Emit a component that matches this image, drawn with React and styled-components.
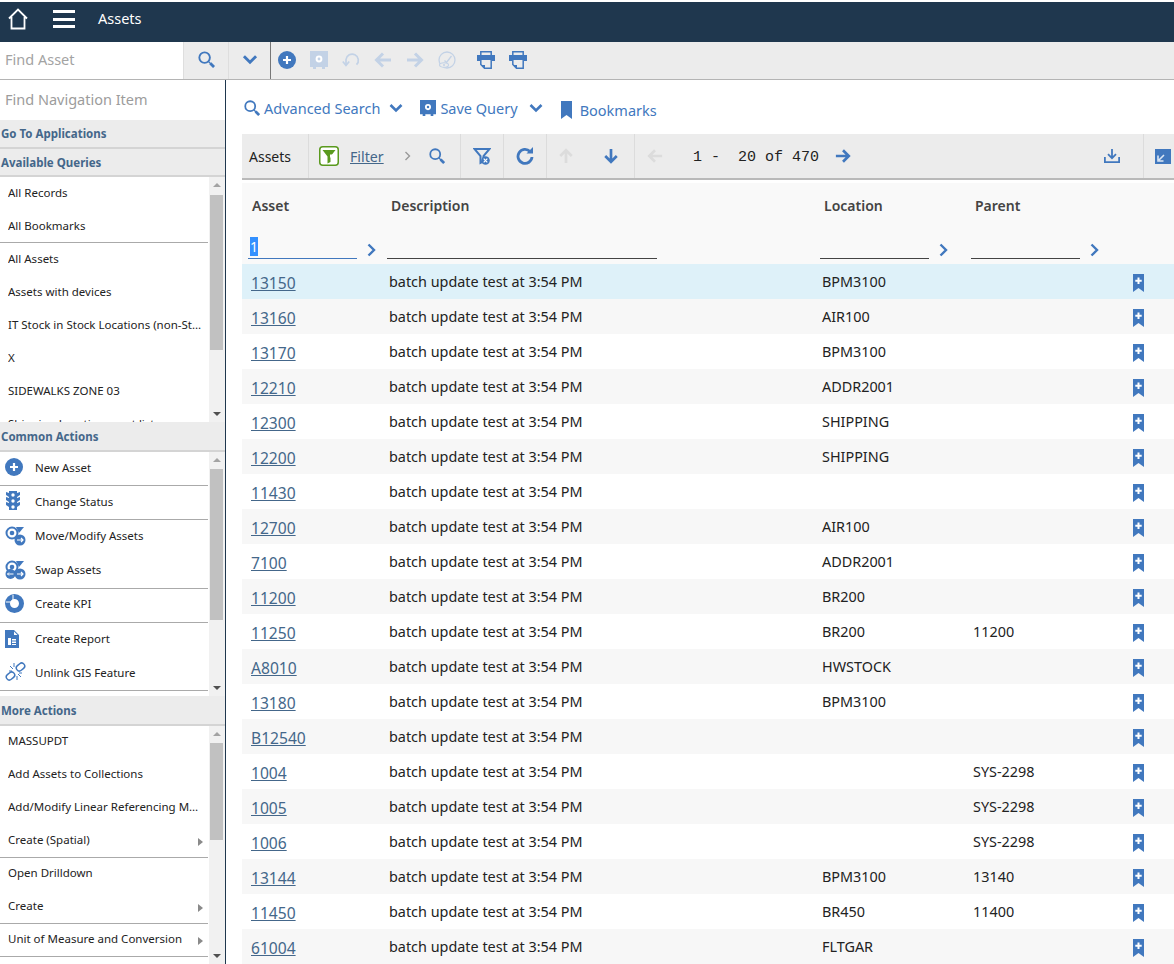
import React from 'react';
import styled, { createGlobalStyle } from 'styled-components';

const BLUE = '#4178be';
const FAINT = '#c3d2e6';
const NAVY = '#1f374e';

const GlobalStyle = createGlobalStyle`
  html, body { margin: 0; padding: 0; background: #fff; }
  body { font-family: "Noto Sans", "Open Sans", sans-serif; color: #222; }
  * { box-sizing: border-box; }
`;

const Page = styled.div`
  width: 1174px;
  height: 964px;
  overflow: hidden;
  padding-top: 2px;
  display: flex;
  flex-direction: column;
`;

const Header = styled.header`
  height: 40px;
  flex: none;
  background: ${NAVY};
  display: flex;
  align-items: center;
  padding-left: 7px;
  color: #fff;
`;

const HomeWrap = styled.span`
  margin: 0 0 6px 1px;
`;

const HeaderTitle = styled.span`
  font-size: 14.5px;
  margin-left: 23px;
  margin-bottom: 9px;
`;

const Hamburger = styled.div`
  width: 22px;
  height: 18px;
  margin-left: 25px;
  margin-bottom: 6px;
  display: flex;
  flex-direction: column;
  justify-content: space-between;
  span { height: 3px; background: #fff; display: block; }
`;

const AppToolbar = styled.div`
  height: 38px;
  flex: none;
  background: #ececec;
  border-bottom: 1px solid #b4b4b4;
  display: flex;
  align-items: center;
`;

const FindBox = styled.div`
  width: 183px;
  height: 100%;
  background: #fff;
  color: #a3a3a3;
  font-size: 14.5px;
  padding: 0 0 3px 5px;
  display: flex;
  align-items: center;
`;

const ToolSquare = styled.div`
  width: ${p => p.$w}px;
  height: 100%;
  flex: none;
  padding-bottom: 2px;
  display: flex;
  align-items: center;
  justify-content: center;
  border-left: 1px solid #dedede;
  border-right: ${p => (p.$edge ? '1px solid #777' : '0')};
`;

const ToolIcons = styled.div`
  display: flex;
  align-items: center;
  gap: 14px;
  margin-left: 7px;
  padding-bottom: 2px;
`;

const PrintGroup = styled.div`
  display: flex;
  gap: 14px;
  margin-left: 7px;
`;

const Body = styled.div`
  flex: 1;
  min-height: 0;
  display: flex;
`;

const Sidebar = styled.aside`
  width: 226px;
  flex: none;
  border-right: 1px solid ${NAVY};
  display: flex;
  flex-direction: column;
  overflow: hidden;
`;

const NavSearch = styled.div`
  height: 40px;
  flex: none;
  color: #9c9c9c;
  font-size: 14.5px;
  padding: 0 0 2px 5px;
  display: flex;
  align-items: center;
`;

const SectionTitle = styled.div`
  height: ${p => p.$h}px;
  flex: none;
  background: #ececec;
  border-bottom: 2px solid #d4d4d4;
  color: #44678a;
  font-size: 11.5px;
  font-weight: 700;
  padding-left: 1px;
  display: flex;
  align-items: center;
`;

const Section = styled.div`
  height: ${p => p.$h}px;
  flex: none;
  display: flex;
  overflow: hidden;
`;

const MenuList = styled.div`
  width: 209px;
  flex: none;
  overflow: hidden;
`;

const MenuRow = styled.div`
  height: ${p => p.$h}px;
  border-bottom: ${p => (p.$sep ? '1px solid #aaa' : '0')};
  width: 208px;
  display: flex;
  align-items: center;
  font-size: 11.5px;
  color: #222;
  padding: 0 4px ${p => p.$pb}px ${p => (p.$icon ? 5 : 8)}px;
`;

const MenuText = styled.span`
  white-space: nowrap;
  overflow: hidden;
  text-overflow: ellipsis;
  flex: 1;
  min-width: 0;
`;

const MenuIcon = styled.span`
  width: 30px;
  flex: none;
  display: flex;
  align-items: center;
`;

const Submenu = styled.span`
  width: 0;
  height: 0;
  flex: none;
  margin: 5px 1px 0 8px;
  border-left: 5px solid #8a8a8a;
  border-top: 4px solid transparent;
  border-bottom: 4px solid transparent;
`;

const ScrollTrack = styled.div`
  width: 16px;
  flex: none;
  background: #f1f1f1;
  display: flex;
  flex-direction: column;
  align-items: center;
  position: relative;
`;

const ScrollThumb = styled.div`
  position: absolute;
  left: 1px;
  width: 13px;
  top: ${p => p.$top}px;
  height: ${p => p.$h}px;
  background: #c1c1c1;
`;

const ScrollArrow = styled.span`
  position: absolute;
  left: 4px;
  ${p => (p.$down ? 'bottom: 6px;' : 'top: 6px;')}
  width: 0;
  height: 0;
  border-left: 4px solid transparent;
  border-right: 4px solid transparent;
  ${p => (p.$down ? 'border-top: 4px solid #505050;' : 'border-bottom: 4px solid #a3a3a3;')}
`;

const Main = styled.main`
  flex: 1;
  min-width: 0;
  padding-left: 16px;
  display: flex;
  flex-direction: column;
  overflow: hidden;
`;

const ActionBar = styled.div`
  height: 54px;
  flex: none;
  display: flex;
  align-items: center;
  padding: 2px 0 0 2px;
`;

const ActionLink = styled.span`
  color: ${BLUE};
  font-size: 14.5px;
  display: flex;
  align-items: center;
  gap: ${p => p.$gap ?? 4}px;
  margin-right: ${p => p.$mr ?? 0}px;
  margin-top: ${p => p.$mt ?? 0}px;
`;

const GridBar = styled.div`
  height: 46px;
  flex: none;
  background: #ececec;
  border-bottom: 2px solid #b9b9b9;
  display: flex;
  align-items: stretch;
  font-size: 14px;
`;

const BarCell = styled.div`
  width: ${p => p.$w}px;
  flex: none;
  display: flex;
  align-items: center;
  justify-content: ${p => (p.$start ? 'flex-start' : 'center')};
  gap: ${p => p.$gap ?? 0}px;
  padding-left: ${p => p.$pl ?? 0}px;
  border-right: ${p => (p.$line ? '1px solid #dcdcdc' : '0')};
`;

const FilterLink = styled.span`
  color: #44678a;
  text-decoration: underline;
  font-size: 14.2px;
  margin-left: 11px;
`;

const BarGap = styled.span`
  display: flex;
  margin-left: ${p => p.$l}px;
`;

const PageCount = styled.span`
  font-family: "Liberation Mono", "DejaVu Sans Mono", monospace;
  font-size: 15px;
  white-space: pre;
  color: #222;
  margin: 2px 0 0 30px;
`;

const Spacer = styled.div`
  flex: 1;
`;

const TableHead = styled.div`
  margin-top: 3px;
  height: 81px;
  flex: none;
  background: #f9f9f9;
`;

const Columns = styled.div`
  display: grid;
  grid-template-columns: 139px 433px 151px 151px 58px;
  align-items: center;
`;

const TitleRow = styled(Columns)`
  height: 46px;
  padding-bottom: 2px;
`;

const ColTitle = styled.div`
  font-size: 14px;
  font-weight: 600;
  color: #444;
  padding-left: 10px;
`;

const FilterRow = styled(Columns)`
  height: 35px;
  align-items: start;
  padding-top: 8px;
`;

const FilterCell = styled.div`
  display: flex;
  align-items: center;
  padding-left: ${p => p.$pl}px;
`;

const FilterInput = styled.div`
  width: ${p => p.$w}px;
  height: 22px;
  flex: none;
  font-size: 14px;
  line-height: 18px;
  padding: 1px 0 0 2px;
  border-bottom: 1px solid ${p => (p.$active ? BLUE : '#444')};
  mark { background: #3390ff; color: #fff; }
`;

const Chevron = styled.span`
  margin-left: 10px;
  margin-top: 3px;
  display: flex;
`;

const Row = styled(Columns)`
  height: 35px;
  background: ${p => (p.$active ? '#def1f9' : p.$odd ? '#f7f7f7' : '#fff')};
  font-size: 14.4px;
  color: #222;
`;

const Cell = styled.div`
  padding-left: 8px;
  white-space: nowrap;
`;

const AssetLink = styled.a`
  color: #44678a;
  text-decoration: underline;
  font-size: 15.6px;
  padding: 2px 0 0 9px;
`;

const BookmarkCell = styled.div`
  padding-left: 17px;
  display: flex;
  align-items: center;
  padding-top: 2px;
`;

const Svg = ({ s = 18, w, h, vb = '0 0 18 18', children }) => (
  <svg width={w ?? s} height={h ?? s} viewBox={vb} style={{ flex: 'none', display: 'block' }}>
    {children}
  </svg>
);

const Search = ({ c = BLUE, s = 18 }) => (
  <Svg s={s}>
    <circle cx="7" cy="7" r="5.600" fill="none" stroke={c} strokeWidth="2" />
    <path d="M11 11l2.500 2.500" stroke={c} strokeWidth="1.400" />
    <path d="M13 13l4 4" stroke={c} strokeWidth="3" />
  </Svg>
);

const ChevDown = ({ c = BLUE, w = 14, h = 10 }) => (
  <Svg w={w} h={h} vb="0 0 14 10">
    <path d="M1.500 2l5.500 5.500L12.500 2" fill="none" stroke={c} strokeWidth="2.600" />
  </Svg>
);

const ChevRight = () => (
  <Svg w={9} h={14} vb="0 0 9 14">
    <path d="M1.500 1.500L7 7l-5.500 5.500" fill="none" stroke={BLUE} strokeWidth="2.400" />
  </Svg>
);

const PlusCircle = ({ s = 18 }) => (
  <Svg s={s}>
    <circle cx="9" cy="9" r="9" fill={BLUE} />
    <path d="M9 5v8M5 9h8" stroke="#fff" strokeWidth="2.200" />
  </Svg>
);

const SafeIcon = ({ c = BLUE, s = 18 }) => (
  <Svg s={s}>
    <path d="M0 0h18v16h-3v2h-3v-2H6v2H3v-2H0z" fill={c} />
    <circle cx="9" cy="8" r="3.400" fill="#fff" />
    <circle cx="9" cy="8" r="1.400" fill={c} />
  </Svg>
);

const Undo = ({ c = FAINT }) => (
  <Svg>
    <path d="M4 13V8.500a6.200 6.200 0 1 1 10.500 5.200" fill="none" stroke={c} strokeWidth="1.700" />
    <path d="M0.800 10.500L4 14.500l3.200-4" fill="none" stroke={c} strokeWidth="1.700" />
  </Svg>
);

const Arrow = ({ dir, c = BLUE, s = 18 }) => {
  const turn = { left: 180, right: 0, up: 270, down: 90 }[dir];
  return (
    <Svg s={s}>
      <g transform={`rotate(${turn} 9 9)`}>
        <path d="M1 9h14M9 2.500l6.500 6.500L9 15.500" fill="none" stroke={c} strokeWidth="3" />
      </g>
    </Svg>
  );
};

const NoView = ({ c = FAINT }) => (
  <Svg>
    <circle cx="9" cy="9" r="8" fill="none" stroke={c} strokeWidth="1.300" />
    <path d="M6.500 9.500l2 2L13.500 5" fill="none" stroke={c} strokeWidth="1.300" />
    <ellipse cx="6" cy="14" rx="4.500" ry="2.300" fill="#ececec" stroke={c} strokeWidth="1.100" />
    <circle cx="6" cy="14" r="1" fill={c} />
  </Svg>
);

const Printer = () => (
  <Svg>
    <path d="M3.800 5V.8h10.400V5" fill="none" stroke={BLUE} strokeWidth="1.500" />
    <path d="M0 4h18v6h-3v-1H3v1H0z" fill={BLUE} />
    <path d="M3.800 9v4.500L7.500 17.250h6.700V9" fill="none" stroke={BLUE} strokeWidth="1.500" />
    <path d="M4 14h4v4z" fill={BLUE} />
  </Svg>
);

const Home = () => (
  <Svg w={20} h={22} vb="0 0 20 22">
    <path d="M1 10.500L10 1.500l9 9M3.500 9V20.500h13V9" fill="none" stroke="#fff" strokeWidth="1.800" />
  </Svg>
);

const Bookmark = ({ w = 11, h = 18 }) => (
  <Svg w={w} h={h} vb="0 0 11 18">
    <path d="M0 0h11v18l-5.500-4L0 18z" fill={BLUE} />
  </Svg>
);

const BookmarkAdd = () => (
  <Svg w={11} h={18} vb="0 0 11 18">
    <path d="M0 0h11v18l-5.500-4L0 18z" fill={BLUE} />
    <path d="M5.500 3.500v6.500M2.300 6.700h6.400" stroke="#fff" strokeWidth="2" />
  </Svg>
);

const FilterBadge = () => (
  <Svg w={20} h={20} vb="0 0 20 20">
    <rect x=".75" y=".75" width="18.500" height="18.500" rx="3" fill="#fff" stroke="#5a9a1e" strokeWidth="1.500" />
    <path d="M3.500 4h13l-5 6.500V16l-3 1.500v-7z" fill="#5a9a1e" />
    <path d="M11 8.500h3.500L11 12z" fill="#fff" />
  </Svg>
);

const FilterClear = () => (
  <Svg>
    <path d="M1.500 2h15l-6 7v5.500L7.500 16V9z" fill="none" stroke={BLUE} strokeWidth="2" />
    <circle cx="12.500" cy="13.500" r="4.300" fill={BLUE} />
    <path d="M10.700 11.700l3.600 3.600M14.300 11.700l-3.600 3.600" stroke="#fff" strokeWidth="1.200" />
  </Svg>
);

const Refresh = () => (
  <Svg>
    <path d="M14 4.500A7 7 0 1 0 16 10" fill="none" stroke={BLUE} strokeWidth="2.800" />
    <path d="M10.500 6.500H17V0z" fill={BLUE} />
  </Svg>
);

const Download = () => (
  <Svg s={16} vb="0 0 18 18">
    <path d="M9 1v10M4.500 7L9 11.500 13.500 7" fill="none" stroke={BLUE} strokeWidth="2" />
    <path d="M1 10v6h16v-6" fill="none" stroke={BLUE} strokeWidth="2" />
  </Svg>
);

const Collapse = () => (
  <Svg w={16} h={15} vb="0 0 16 15">
    <rect width="16" height="15" fill={BLUE} />
    <path d="M9 6l-5 5M3 6.500V12h5.500" fill="none" stroke="#dbe6f4" strokeWidth="1.600" />
  </Svg>
);

const BarChevron = () => (
  <Svg w={7} h={10} vb="0 0 7 10">
    <path d="M1.500 1L5.500 5l-4 4" fill="none" stroke="#999" strokeWidth="1.400" />
  </Svg>
);

const TrafficLight = () => (
  <Svg w={16} h={20} vb="2 0 16 20">
    <path d="M6 0h8v2l3-1v3l-3 2v1l3-1v3l-3 2v1l3-1v3l-3 2v3H6v-3l-3-2v-3l3 1v-1L3 9V6l3 1V6L3 4V1l3 1z" fill={BLUE} />
    <circle cx="10" cy="4" r="1.700" fill="#fff" />
    <circle cx="10" cy="10" r="1.700" fill="#fff" />
    <circle cx="10" cy="16" r="1.700" fill="#fff" />
  </Svg>
);

const Gears = ({ swap }) => (
  <Svg w={21} h={20} vb="0 0 21 20">
    <circle cx="7" cy="7" r="5.500" fill="none" stroke={BLUE} strokeWidth="2" />
    <circle cx="7" cy="7" r="2.300" fill={BLUE} />
    <path d="M11 1h8l-5 6z" fill={BLUE} />
    {swap && <circle cx="5.500" cy="14" r="5" fill={BLUE} />}
    {swap && <path d="M2.500 14h6M4 12.500L2.500 14 4 15.500" fill="none" stroke="#fff" strokeWidth="1" />}
    <circle cx="15" cy="14" r="5.500" fill={BLUE} />
    <path d="M12 14h6M16 12l2 2-2 2" fill="none" stroke="#fff" strokeWidth="1.200" />
  </Svg>
);

const KpiIcon = () => (
  <Svg s={19} vb="0 0 19 19">
    <circle cx="9.500" cy="9.500" r="7" fill="none" stroke={BLUE} strokeWidth="5" />
    <path d="M1 8h5.500L8 6.500V1" fill="none" stroke="#fff" strokeWidth="1" />
  </Svg>
);

const ReportIcon = () => (
  <Svg w={14} h={18} vb="0 0 14 18">
    <path d="M0 0h9l5 5v13H0z" fill={BLUE} />
    <path d="M3 8h3v7H3zM7 9h4v1.500H7zM7 11.500h4V13H7zM7 14h4v1H7z" fill="#fff" />
    <path d="M9 1.500L12.500 5H9z" fill="#fff" />
  </Svg>
);

const UnlinkIcon = () => (
  <Svg w={21} h={20} vb="0 0 21 20">
    <rect x="11" y="2" width="9" height="6" rx="3" transform="rotate(-40 15.500 5)" fill="none" stroke={BLUE} strokeWidth="1.500" />
    <rect x="1" y="11" width="9" height="6" rx="3" transform="rotate(-40 5.500 14)" fill="none" stroke={BLUE} strokeWidth="1.500" />
    <path d="M9 1v4M5 4l3 3M4 9h3M12 18v-4M16 15l-3-3M17 11h-3" stroke={BLUE} strokeWidth="1" />
  </Svg>
);

const Scrollbar = ({ top, h }) => (
  <ScrollTrack>
    <ScrollArrow />
    <ScrollThumb $top={top} $h={h} />
    <ScrollArrow $down />
  </ScrollTrack>
);

const queries = [
  { t: 'All Records' },
  { t: 'All Bookmarks', sep: true },
  { t: 'All Assets' },
  { t: 'Assets with devices' },
  { t: 'IT Stock in Stock Locations (non-Stock)' },
  { t: 'X' },
  { t: 'SIDEWALKS ZONE 03' },
  { t: 'Shipping Location asset list' },
];

const common = [
  { t: 'New Asset', icon: <PlusCircle />, sep: true },
  { t: 'Change Status', icon: <TrafficLight />, sep: true },
  { t: 'Move/Modify Assets', icon: <Gears /> },
  { t: 'Swap Assets', icon: <Gears swap />, sep: true },
  { t: 'Create KPI', icon: <KpiIcon />, sep: true },
  { t: 'Create Report', icon: <ReportIcon /> },
  { t: 'Unlink GIS Feature', icon: <UnlinkIcon />, sep: true },
];

const more = [
  { t: 'MASSUPDT' },
  { t: 'Add Assets to Collections' },
  { t: 'Add/Modify Linear Referencing Measures' },
  { t: 'Create (Spatial)', sub: true, sep: true },
  { t: 'Open Drilldown' },
  { t: 'Create', sub: true, sep: true },
  { t: 'Unit of Measure and Conversion', sub: true, sep: true },
];

const assets = [
  ['13150', 'BPM3100', ''],
  ['13160', 'AIR100', ''],
  ['13170', 'BPM3100', ''],
  ['12210', 'ADDR2001', ''],
  ['12300', 'SHIPPING', ''],
  ['12200', 'SHIPPING', ''],
  ['11430', '', ''],
  ['12700', 'AIR100', ''],
  ['7100', 'ADDR2001', ''],
  ['11200', 'BR200', ''],
  ['11250', 'BR200', '11200'],
  ['A8010', 'HWSTOCK', ''],
  ['13180', 'BPM3100', ''],
  ['B12540', '', ''],
  ['1004', '', 'SYS-2298'],
  ['1005', '', 'SYS-2298'],
  ['1006', '', 'SYS-2298'],
  ['13144', 'BPM3100', '13140'],
  ['11450', 'BR450', '11400'],
  ['61004', 'FLTGAR', ''],
];

const Menu = ({ items, h, pb = 3, pbSep = 3 }) => (
  <MenuList>
    {items.map(item => (
      <MenuRow key={item.t} $h={h} $sep={item.sep} $icon={!!item.icon} $pb={item.sep ? pbSep : pb}>
        {item.icon && <MenuIcon>{item.icon}</MenuIcon>}
        <MenuText>{item.t}</MenuText>
        {item.sub && <Submenu />}
      </MenuRow>
    ))}
  </MenuList>
);

export default function App() {
  return (
    <Page>
      <GlobalStyle />
      <Header>
        <HomeWrap><Home /></HomeWrap>
        <Hamburger><span /><span /><span /></Hamburger>
        <HeaderTitle>Assets</HeaderTitle>
      </Header>

      <AppToolbar>
        <FindBox>Find Asset</FindBox>
        <ToolSquare $w={45}><Search s={17} /></ToolSquare>
        <ToolSquare $w={43} $edge><ChevDown w={16} h={11} /></ToolSquare>
        <ToolIcons>
          <PlusCircle />
          <SafeIcon c={FAINT} />
          <Undo />
          <Arrow dir="left" c={FAINT} />
          <Arrow dir="right" c={FAINT} />
          <NoView />
          <PrintGroup>
            <Printer />
            <Printer />
          </PrintGroup>
        </ToolIcons>
      </AppToolbar>

      <Body>
        <Sidebar>
          <NavSearch>Find Navigation Item</NavSearch>
          <SectionTitle $h={29}>Go To Applications</SectionTitle>
          <SectionTitle $h={28}>Available Queries</SectionTitle>
          <Section $h={245}>
            <Menu items={queries} h={33} pb={3} pbSep={2} />
            <Scrollbar top={18} h={155} />
          </Section>
          <SectionTitle $h={30}>Common Actions</SectionTitle>
          <Section $h={244}>
            <Menu items={common} h={34.2} />
            <Scrollbar top={17} h={151} />
          </Section>
          <SectionTitle $h={30}>More Actions</SectionTitle>
          <Section $h={238}>
            <Menu items={more} h={33} pb={5} pbSep={3} />
            <Scrollbar top={17} h={97} />
          </Section>
        </Sidebar>

        <Main>
          <ActionBar>
            <ActionLink $mr={9}><Search s={16} />Advanced Search</ActionLink>
            <ActionLink $mr={17}><ChevDown /></ActionLink>
            <ActionLink $mr={11}><SafeIcon s={16} />Save Query</ActionLink>
            <ActionLink $mr={18}><ChevDown /></ActionLink>
            <ActionLink $gap={8} $mt={4}><Bookmark />Bookmarks</ActionLink>
          </ActionBar>

          <GridBar>
            <BarCell $w={67} $start $pl={7} $line>Assets</BarCell>
            <BarCell $w={152} $start $pl={10} $line>
              <FilterBadge />
              <FilterLink>Filter</FilterLink>
              <BarGap $l={20}><BarChevron /></BarGap>
              <BarGap $l={18}><Search s={16} /></BarGap>
            </BarCell>
            <BarCell $w={43} $line><FilterClear /></BarCell>
            <BarCell $w={43} $line><Refresh /></BarCell>
            <BarCell $w={88} $start $gap={29} $pl={11} $line>
              <Arrow dir="up" c="#dcdcdc" s={16} />
              <Arrow dir="down" s={16} />
            </BarCell>
            <BarCell $w={240} $start $pl={12}>
              <Arrow dir="left" c="#dcdcdc" s={16} />
              <PageCount>1 -  20 of 470</PageCount>
              <BarGap $l={16}><Arrow dir="right" s={16} /></BarGap>
            </BarCell>
            <Spacer />
            <BarCell $w={40} $start $line><Download /></BarCell>
            <BarCell $w={30} $start $pl={11}><Collapse /></BarCell>
          </GridBar>

          <TableHead>
            <TitleRow>
              <ColTitle>Asset</ColTitle>
              <ColTitle>Description</ColTitle>
              <ColTitle>Location</ColTitle>
              <ColTitle>Parent</ColTitle>
            </TitleRow>
            <FilterRow>
              <FilterCell $pl={6}>
                <FilterInput $w={109} $active><mark>1</mark></FilterInput>
                <Chevron><ChevRight /></Chevron>
              </FilterCell>
              <FilterCell $pl={6}><FilterInput $w={270} /></FilterCell>
              <FilterCell $pl={6}>
                <FilterInput $w={109} />
                <Chevron><ChevRight /></Chevron>
              </FilterCell>
              <FilterCell $pl={6}>
                <FilterInput $w={109} />
                <Chevron><ChevRight /></Chevron>
              </FilterCell>
            </FilterRow>
          </TableHead>

          {assets.map(([id, location, parent], i) => (
            <Row key={id} $active={i === 0} $odd={i % 2 === 1}>
              <AssetLink>{id}</AssetLink>
              <Cell>batch update test at 3:54 PM</Cell>
              <Cell>{location}</Cell>
              <Cell>{parent}</Cell>
              <BookmarkCell><BookmarkAdd /></BookmarkCell>
            </Row>
          ))}
        </Main>
      </Body>
    </Page>
  );
}
